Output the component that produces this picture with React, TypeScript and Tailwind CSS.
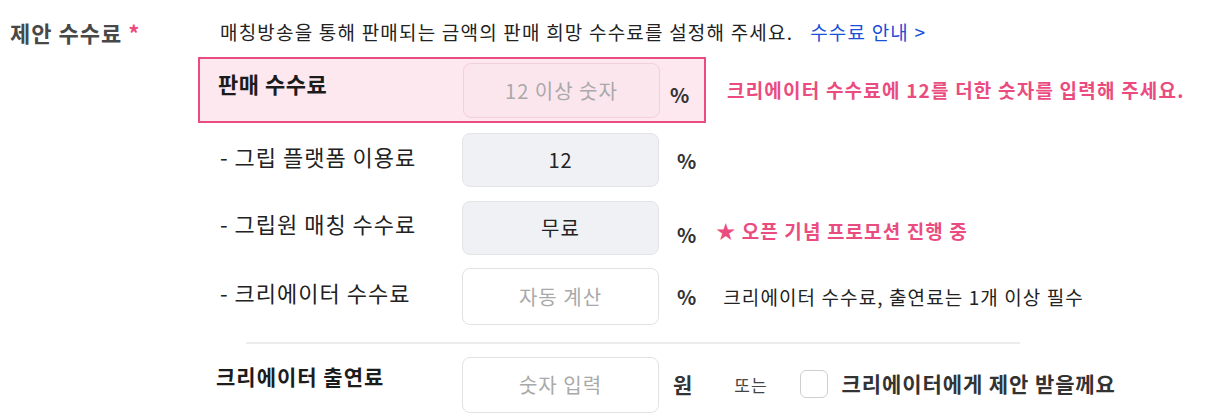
import React from "react";

const font = "font-['Noto_Sans_CJK_KR','Noto_Sans',sans-serif]";

function FeeInput({ value, placeholder, tone }: { value?: string; placeholder?: string; tone: "pink" | "gray" | "white" }) {
  const toneClass =
    tone === "pink"
      ? "bg-[#fce6ee] border-[#f4cfdc]"
      : tone === "gray"
      ? "bg-[#f0f1f4] border-[#e3e4e8]"
      : "bg-white border-[#e2e2e2]";
  return (
    <div
      className={`w-[197px] shrink-0 rounded-[8px] border flex items-center justify-center text-[20px] tracking-[1px] ${toneClass}`}
    >
      {value ? (
        <span className="text-[#222]">{value}</span>
      ) : (
        <span className="text-[#a9a9a9]">{placeholder}</span>
      )}
    </div>
  );
}

export default function App() {
  return (
    <div className={`${font} w-[1208px] h-[416px] bg-white text-[#222] overflow-hidden`}>
      {/* 상단 제목 */}
      <div className="flex items-center h-[66px] pb-[1px]">
        <h2 className="w-[220px] shrink-0 pl-[10px] text-[22px] tracking-[1px] font-bold text-[#484848]">
          제안 수수료 <span className="text-[#ec4a82]">*</span>
        </h2>
        <p className="text-[19px] tracking-[1.2px] text-[#222]">
          매칭방송을 통해 판매되는 금액의 판매 희망 수수료를 설정해 주세요.
          <span className="ml-[17px] text-[#1a4fd8]">수수료 안내 &gt;</span>
        </p>
      </div>

      <div className="mt-[-9px] flex flex-col">
        {/* 판매 수수료 */}
        <div className="flex items-center">
          <div className="ml-[198px] w-[508px] h-[66px] border-2 border-[#ea4c80] bg-[#fde8ef] flex pt-[4px] pl-[18px]">
            <div className="w-[245px] shrink-0 mt-[4px] text-[22px] tracking-[0.5px] font-bold text-[#1c1c1c]">판매 수수료</div>
            <div className="flex h-[55px]">
              <FeeInput placeholder="12 이상 숫자" tone="pink" />
            </div>
            <div className="ml-[10px] mt-[17px] text-[20px] font-bold text-[#333]">%</div>
          </div>
          <div className="ml-[21px] text-[19px] tracking-[1.2px] font-bold text-[#ea4c80]">
            크리에이터 수수료에 12를 더한 숫자를 입력해 주세요.
          </div>
        </div>

        {/* 그립 플랫폼 이용료 */}
        <div className="flex mt-[10px] h-[54px]">
          <div className="w-[462px] shrink-0 pl-[220px] mt-[7px] text-[22px] tracking-[1px]">- 그립 플랫폼 이용료</div>
          <FeeInput value="12" tone="gray" />
          <div className="ml-[18px] mt-[13px] text-[20px] font-bold text-[#333]">%</div>
        </div>

        {/* 그립원 매칭 수수료 */}
        <div className="flex mt-[14px] h-[54px]">
          <div className="w-[462px] shrink-0 pl-[220px] mt-[6px] text-[22px] tracking-[1px]">- 그립원 매칭 수수료</div>
          <FeeInput value="무료" tone="gray" />
          <div className="ml-[18px] mt-[19px] text-[20px] font-bold text-[#333]">%</div>
          <div className="ml-[20px] mt-[16px] text-[19px] tracking-[1.1px] font-bold text-[#ea4c80]">★ 오픈 기념 프로모션 진행 중</div>
        </div>

        {/* 크리에이터 수수료 */}
        <div className="flex mt-[13px] h-[57px]">
          <div className="w-[462px] shrink-0 pl-[220px] mt-[8px] text-[22px] tracking-[1px]">- 크리에이터 수수료</div>
          <FeeInput placeholder="자동 계산" tone="white" />
          <div className="ml-[18px] mt-[14px] text-[20px] font-bold text-[#333]">%</div>
          <div className="ml-[27px] mt-[15px] text-[19px] tracking-[1.1px] text-[#222]">크리에이터 수수료, 출연료는 1개 이상 필수</div>
        </div>

        <div className="ml-[246px] w-[774px] h-[2px] bg-[#ececec] mt-[17px]" />

        {/* 크리에이터 출연료 */}
        <div className="flex mt-[13px] h-[56px]">
          <div className="w-[462px] shrink-0 pl-[216px] mt-[4px] text-[21px] tracking-[1px] font-bold text-[#1c1c1c]">크리에이터 출연료</div>
          <FeeInput placeholder="숫자 입력" tone="white" />
          <div className="ml-[14px] mt-[12px] text-[21px] font-bold text-[#333]">원</div>
          <div className="ml-[42px] mt-[15px] text-[17px] tracking-[1px] text-[#444]">또는</div>
          <div className="ml-[32px] mt-[13px] w-[28px] h-[28px] rounded-[6px] border border-[#cfcfcf] bg-white" />
          <div className="ml-[14px] mt-[11px] text-[21px] tracking-[0.9px] font-bold text-[#333]">크리에이터에게 제안 받을께요</div>
        </div>
      </div>
    </div>
  );
}
